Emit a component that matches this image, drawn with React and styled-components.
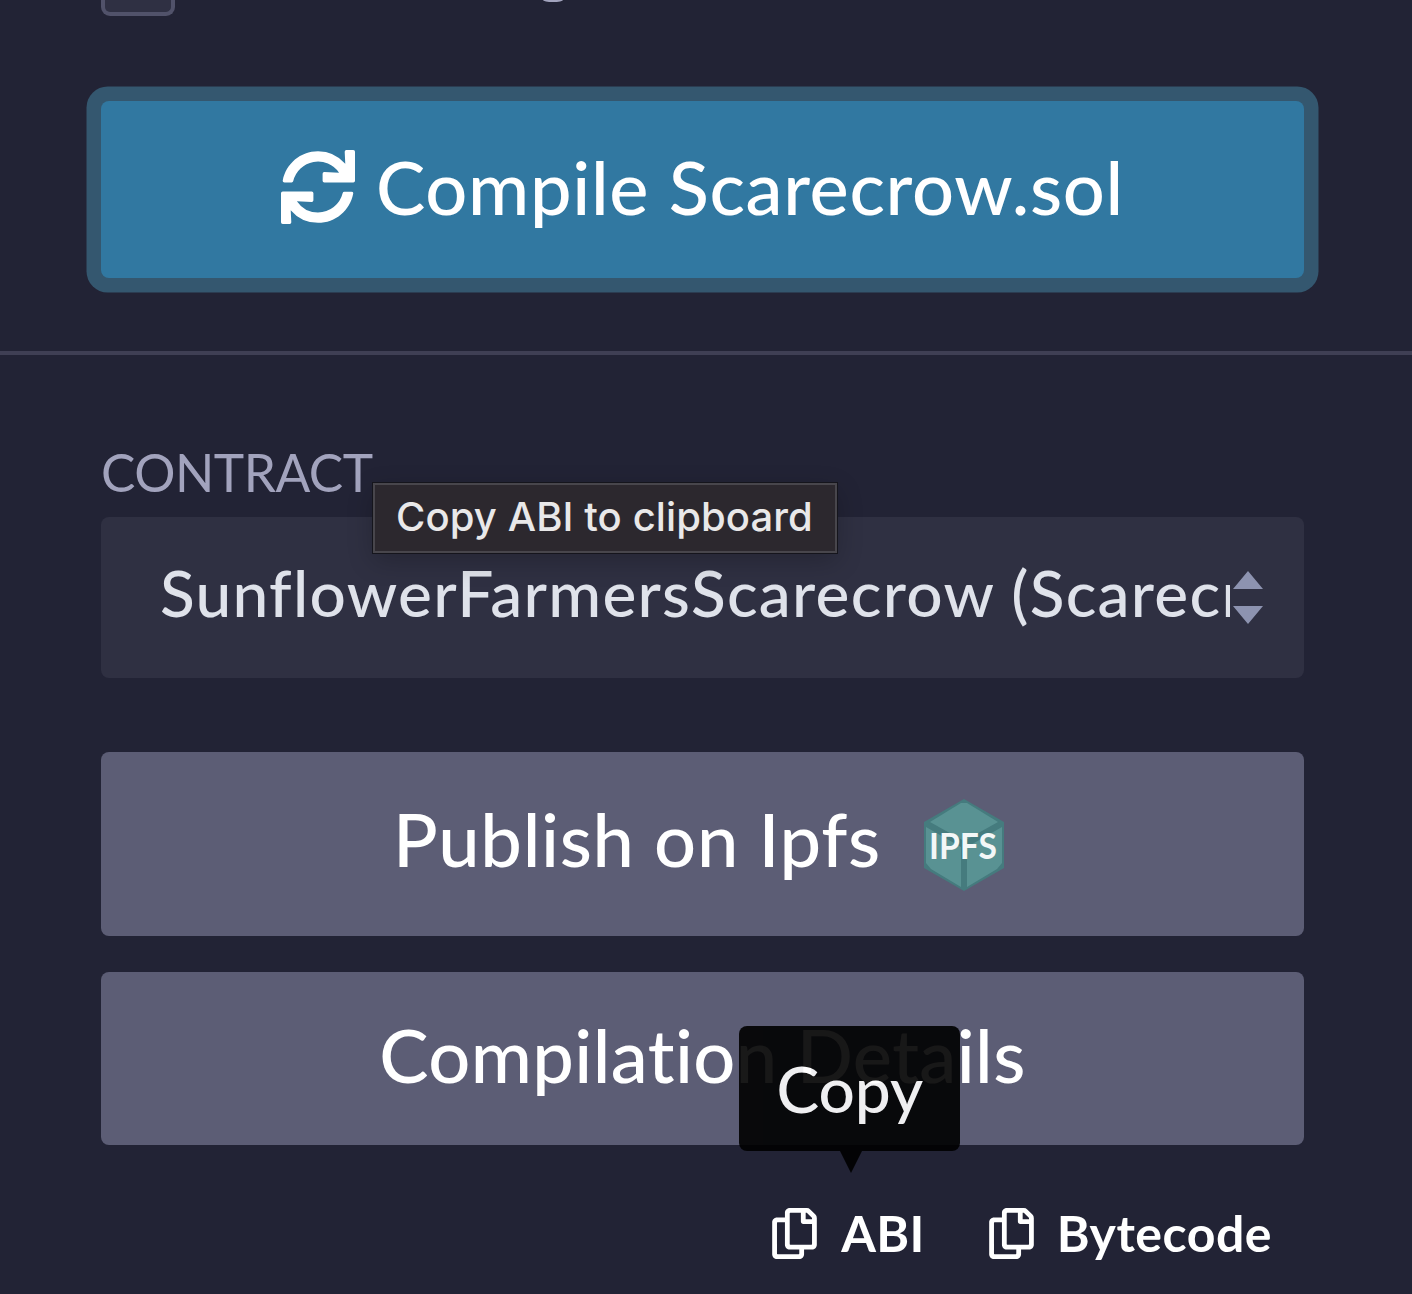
import React from "react";
import styled, { createGlobalStyle } from "styled-components";
import { FaSync, FaRegCopy } from "react-icons/fa";

const GlobalStyle = createGlobalStyle`
  *, *::before, *::after { box-sizing: border-box; }
  body {
    margin: 0;
    background: #222335;
    font-family: Lato, "Open Sans", sans-serif;
    overflow: hidden;
  }
`;

const Panel = styled.main`
  width: 1412px;
  height: 1294px;
  overflow: hidden;
  display: flex;
  flex-direction: column;
  background: #222335;
`;

const OptionRow = styled.div`
  display: flex;
  align-items: flex-start;
  height: 101px;
  padding-left: 101px;
  flex: none;
`;

const Checkbox = styled.span`
  width: 74px;
  height: 16px;
  border: 4px solid #51526a;
  border-top: 0;
  border-radius: 0 0 9px 9px;
  background: #2f3043;
`;

const LabelTail = styled.span`
  width: 20px;
  height: 2px;
  margin-left: 368px;
  border-radius: 0 0 10px 10px / 0 0 2px 2px;
  background: #a2a3bd;
`;

const Section = styled.section`
  display: flex;
  flex-direction: column;
  flex: none;
  padding: 0 108px 0 101px;
`;

const Button = styled.button`
  display: flex;
  align-items: center;
  justify-content: center;
  gap: ${(p) => p.$gap || 0}px;
  width: 1203px;
  height: ${(p) => p.$height}px;
  margin: 0 0 ${(p) => p.$after || 0}px;
  padding: 0 0 ${(p) => p.$lift}px;
  border: 0;
  border-radius: 8px;
  background: ${(p) => (p.$primary ? "#3178a1" : "#5c5d75")};
  box-shadow: ${(p) => (p.$primary ? "0 0 0 14.5px #34576f" : "none")};
  color: #fff;
  font-family: inherit;
  font-size: 74px;
  line-height: 88px;
  font-weight: 500;
  letter-spacing: ${(p) => p.$tracking || 0}px;
  white-space: nowrap;
`;

const Divider = styled.hr`
  width: 100%;
  height: 4px;
  flex: none;
  margin: 73px 0 96px;
  border: 0;
  background: #3f3f54;
`;

const FieldLabel = styled.label`
  height: 65.5px;
  color: #a2a3bd;
  font-size: 51.5px;
  line-height: 42px;
  letter-spacing: -0.5px;
`;

const Select = styled.div`
  display: flex;
  align-items: center;
  width: 1203px;
  height: 161.5px;
  margin-bottom: 74px;
  padding: 0 40px 0 59px;
  border-radius: 8px;
  background: #2f3042;
`;

const SelectValue = styled.span`
  width: 1070px;
  padding-bottom: 8px;
  overflow: hidden;
  color: #dfe2ea;
  font-size: 64px;
  line-height: 84px;
  font-weight: 500;
  letter-spacing: 1.27px;
  white-space: nowrap;
`;

const SelectArrows = styled.svg`
  width: 30px;
  height: 53px;
  margin-left: 3px;
  flex: none;
`;

const IpfsLogo = styled.svg`
  width: 80px;
  height: 92px;
  margin: 12px 8px 0 0;
`;

const CopyRow = styled.div`
  display: flex;
  justify-content: flex-end;
  gap: 64px;
  padding: 53.5px 32px 0 0;
`;

const CopyLink = styled.a`
  position: relative;
  display: flex;
  align-items: center;
  gap: ${(p) => p.$gap}px;
  height: 70px;
  color: #fff;
  font-size: 50px;
  line-height: 70px;
  font-weight: 700;
  letter-spacing: ${(p) => p.$tracking}px;

  svg { width: 45px; height: 51px; }
`;

const CopyTip = styled.span`
  position: absolute;
  left: -33px;
  top: -172.5px;
  display: flex;
  justify-content: center;
  width: 221px;
  height: 125px;
  padding-top: 21px;
  border-radius: 8px;
  background: #000;
  color: #fff;
  opacity: 0.9;
  font-size: 64px;
  line-height: 84px;
  font-weight: 500;
  letter-spacing: 0;

  &::after {
    content: "";
    position: absolute;
    left: 101px;
    top: 125px;
    border: 11px solid transparent;
    border-top: 22px solid #000;
    border-bottom: 0;
  }
`;

const SystemTip = styled.div`
  position: absolute;
  left: 373px;
  top: 483px;
  display: flex;
  align-items: center;
  justify-content: center;
  width: 464px;
  height: 70px;
  padding: 0 1px 2px 0;
  border: 2px solid #48464c;
  background: #2c282e;
  box-shadow: 0 0 0 1px #15151c, 0 8px 26px rgba(0, 0, 0, 0.22);
  color: #e9e8e9;
  font-family: Inter, sans-serif;
  font-size: 40px;
  line-height: 48px;
  font-weight: 500;
  letter-spacing: 0.1px;
  white-space: nowrap;
`;

export default function App() {
  return (
    <Panel>
      <GlobalStyle />
      <OptionRow>
        <Checkbox />
        <LabelTail />
      </OptionRow>
      <Section>
        <Button $primary $height={177} $lift={5} $gap={21} $tracking={0.7}>
          <FaSync />
          <span>Compile Scarecrow.sol</span>
        </Button>
      </Section>
      <Divider />
      <Section>
        <FieldLabel>CONTRACT</FieldLabel>
        <Select>
          <SelectValue>SunflowerFarmersScarecrow (Scarecrow.sol)</SelectValue>
          <SelectArrows viewBox="0 0 30 53" fill="#8d93b0">
            <path d="M15 0 30 18H0zM0 35h30L15 53z" />
          </SelectArrows>
        </Select>
        <Button $height={183.5} $lift={9} $gap={43} $after={36.5} $tracking={0.7}>
          <span>Publish on Ipfs</span>
          <IpfsLogo viewBox="0 0 80 92">
            <path d="M40 0 80 23v46L40 92 0 69V23z" fill="#457b7e" />
            <path d="M37 4h6l31 19-34 19L6 23z" fill="#599293" />
            <path d="M2 28 37 48v40L7 70 2 64zM78 28 43 48v40l30-18 5-6z" fill="#599293" />
            <text
              x="5"
              y="60"
              textLength="68"
              lengthAdjust="spacingAndGlyphs"
              fill="#f3f7f7"
              fontFamily="Lato, sans-serif"
              fontSize="36"
              fontWeight="700"
              letterSpacing="0"
            >
              IPFS
            </text>
          </IpfsLogo>
        </Button>
        <Button $height={172.5} $lift={6} $tracking={0.4}>
          <span>Compilation Details</span>
        </Button>
        <CopyRow>
          <CopyLink $gap={24} $tracking={0.3}>
            <FaRegCopy />
            <span>ABI</span>
            <CopyTip>Copy</CopyTip>
          </CopyLink>
          <CopyLink $gap={23} $tracking={0.5}>
            <FaRegCopy />
            <span>Bytecode</span>
          </CopyLink>
        </CopyRow>
      </Section>
      <SystemTip>Copy ABI to clipboard</SystemTip>
    </Panel>
  );
}
